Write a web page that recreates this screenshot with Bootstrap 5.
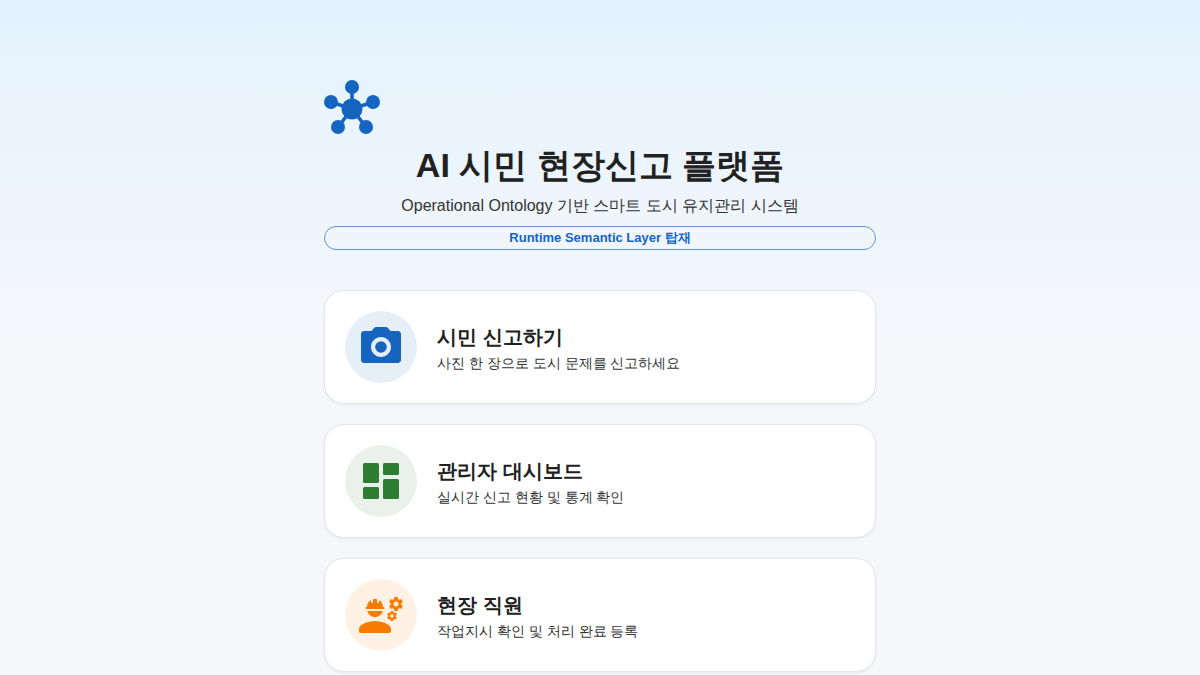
<!DOCTYPE html>
<html lang="ko">
<head>
  <meta charset="UTF-8">
  <meta name="viewport" content="width=device-width, initial-scale=1.0">
  <title>AI 시민 현장신고 플랫폼</title>
  <link href="https://cdn.jsdelivr.net/npm/bootstrap@5.3.0/dist/css/bootstrap.min.css" rel="stylesheet">
  <style>
    body {
      min-height: 100vh;
      font-family: "Liberation Sans", sans-serif;
      color: #212121;
      background: linear-gradient(180deg, #e3f2fd 0%, #f5f7fb 50%, #f5f7fb 100%);
      overflow: hidden;
    }
    .page-wrap { width: 552px; padding-top: 80px; }
    .logo-icon { width: 56px; height: 56px; display: block; }
    .main-title { font-size: 34px; line-height: 41px; font-weight: 700; margin: 9px 0 8px; }
    .sub-title { font-size: 16px; line-height: 24px; color: #333; margin: 0 0 8px; }
    .layer-chip {
      height: 24px;
      line-height: 22px;
      font-size: 13px;
      font-weight: 700;
      color: #1565c0;
      border: 1px solid #5b93d3;
      border-radius: 12px;
      margin-bottom: 40px;
    }
    .menu-list { gap: 20px; }
    .menu-card {
      height: 114px;
      padding: 20px;
      border: 1px solid #e3e6ea;
      border-radius: 20px;
      background: #fff;
      box-shadow: 0 1px 3px rgba(0,0,0,.06);
      gap: 20px;
    }
    .icon-circle { width: 72px; height: 72px; border-radius: 50%; flex: none; }
    .icon-circle svg { width: 48px; height: 48px; }
    .icon-blue { background: #e6eff8; color: #1565c0; }
    .icon-green { background: #eaf1ea; color: #2e7d32; }
    .icon-orange { background: #fff2e5; color: #f57c00; }
    .card-name { font-size: 20px; line-height: 32px; font-weight: 700; margin: 0; }
    .card-desc { font-size: 14px; line-height: 20px; color: #333; margin: 0; }
  </style>
</head>
<body>
<div class="page-wrap mx-auto d-flex flex-column">
  <svg class="logo-icon" viewBox="0 0 56 56" fill="#1565c0" stroke="#1565c0">
    <g stroke-width="3.6">
      <line x1="28" y1="29" x2="28" y2="7"/>
      <line x1="28" y1="29" x2="7" y2="22"/>
      <line x1="28" y1="29" x2="49" y2="22"/>
      <line x1="28" y1="29" x2="14" y2="47"/>
      <line x1="28" y1="29" x2="42" y2="47"/>
    </g>
    <g stroke="none">
      <circle cx="28" cy="29" r="10.5"/>
      <circle cx="28" cy="7" r="7"/>
      <circle cx="7" cy="22" r="7"/>
      <circle cx="49" cy="22" r="7"/>
      <circle cx="14" cy="47" r="7"/>
      <circle cx="42" cy="47" r="7"/>
    </g>
  </svg>
  <h1 class="main-title text-center">AI 시민 현장신고 플랫폼</h1>
  <p class="sub-title text-center">Operational Ontology 기반 스마트 도시 유지관리 시스템</p>
  <div class="layer-chip text-center">Runtime Semantic Layer 탑재</div>

  <div class="d-flex flex-column menu-list">
    <div class="menu-card d-flex align-items-center">
      <div class="icon-circle icon-blue d-flex align-items-center justify-content-center">
        <svg viewBox="0 0 24 24" fill="currentColor"><circle cx="12" cy="12" r="2.9"/><path d="M20.5 4h-3.67l-1.24-1.35c-.37-.41-.91-.65-1.47-.65H9.88c-.56 0-1.1.24-1.48.65L7.17 4H3.5C2.67 4 2 4.67 2 5.5v13c0 .83.67 1.5 1.5 1.5h17c.83 0 1.5-.67 1.5-1.5v-13c0-.83-.67-1.5-1.5-1.5zM12 17c-2.76 0-5-2.24-5-5s2.24-5 5-5 5 2.24 5 5-2.24 5-5 5z"/></svg>
      </div>
      <div>
        <h2 class="card-name">시민 신고하기</h2>
        <p class="card-desc">사진 한 장으로 도시 문제를 신고하세요</p>
      </div>
    </div>
    <div class="menu-card d-flex align-items-center">
      <div class="icon-circle icon-green d-flex align-items-center justify-content-center">
        <svg viewBox="0 0 24 24" fill="currentColor"><rect x="3" y="3" width="8" height="10" rx=".8"/><rect x="3" y="15" width="8" height="6" rx=".8"/><rect x="13" y="3" width="8" height="6" rx=".8"/><rect x="13" y="11" width="8" height="10" rx=".8"/></svg>
      </div>
      <div>
        <h2 class="card-name">관리자 대시보드</h2>
        <p class="card-desc">실시간 신고 현황 및 통계 확인</p>
      </div>
    </div>
    <div class="menu-card d-flex align-items-center">
      <div class="icon-circle icon-orange d-flex align-items-center justify-content-center">
        <svg viewBox="0 0 24 24" fill="currentColor">
          <path d="M9 15c-2.67 0-8 1.34-8 4v1c0 .55.45 1 1 1h14c.55 0 1-.45 1-1v-1c0-2.66-5.33-4-8-4z"/>
          <path d="M22.1,6.84c0.01-0.11,0.02-0.22,0.02-0.34c0-0.12-0.01-0.23-0.03-0.34l0.74-0.58c0.07-0.05,0.08-0.15,0.04-0.22l-0.7-1.21c-0.04-0.08-0.14-0.1-0.21-0.08L21.1,4.42c-0.18-0.14-0.38-0.25-0.59-0.34l-0.13-0.93C20.36,3.06,20.29,3,20.2,3h-1.4c-0.09,0-0.16,0.06-0.17,0.15L18.5,4.08c-0.21,0.09-0.41,0.21-0.59,0.34l-0.87-0.35c-0.08-0.03-0.17,0-0.21,0.08l-0.7,1.21c-0.04,0.08-0.03,0.17,0.04,0.22l0.74,0.58c-0.02,0.11-0.03,0.23-0.03,0.34c0,0.11,0.01,0.23,0.03,0.34l-0.74,0.58c-0.07,0.05-0.08,0.15-0.04,0.22l0.7,1.21c0.04,0.08,0.14,0.1,0.21,0.08l0.87-0.35c0.18,0.14,0.38,0.25,0.59,0.34l0.13,0.93C18.64,9.94,18.71,10,18.8,10h1.4c0.09,0,0.16-0.06,0.17-0.15l0.13-0.93c0.21-0.09,0.41-0.21,0.59-0.34l0.87,0.35c0.08,0.03,0.17,0,0.21-0.08l0.7-1.21c0.04-0.08,0.03-0.17-0.04-0.22L22.1,6.84z M19.5,7.75c-0.69,0-1.25-0.56-1.25-1.25s0.56-1.25,1.25-1.25s1.25,0.56,1.25,1.25S20.19,7.75,19.5,7.75z"/>
          <path d="M19.92,11.68l-0.5-0.87c-0.03-0.06-0.1-0.08-0.15-0.06l-0.62,0.25c-0.13-0.1-0.27-0.18-0.42-0.24l-0.09-0.66C18.12,10.04,18.06,10,18,10h-1c-0.06,0-0.11,0.04-0.12,0.11l-0.09,0.66c-0.15,0.06-0.29,0.15-0.42,0.24l-0.62-0.25c-0.06-0.02-0.12,0-0.15,0.06l-0.5,0.87c-0.03,0.06-0.02,0.12,0.03,0.16l0.53,0.41c-0.01,0.08-0.02,0.16-0.02,0.24c0,0.08,0.01,0.17,0.02,0.24l-0.53,0.41c-0.05,0.04-0.06,0.11-0.03,0.16l0.5,0.87c0.03,0.06,0.1,0.08,0.15,0.06l0.62-0.25c0.13,0.1,0.27,0.18,0.42,0.24l0.09,0.66C16.89,14.96,16.94,15,17,15h1c0.06,0,0.11-0.04,0.12-0.11l0.09-0.66c0.15-0.06,0.29-0.15,0.42-0.24l0.62,0.25c0.06,0.02,0.12,0,0.15-0.06l0.5-0.87c0.03-0.06,0.02-0.12-0.03-0.16l-0.52-0.41c0.01-0.08,0.02-0.16,0.02-0.24c0-0.08-0.01-0.17-0.02-0.24l0.53-0.41C19.95,11.81,19.96,11.74,19.92,11.68z M17.5,13.33c-0.46,0-0.83-0.38-0.83-0.83c0-0.46,0.38-0.83,0.83-0.83s0.83,0.38,0.83,0.83C18.33,12.96,17.96,13.33,17.5,13.33z"/>
          <path d="M4.74,9h8.53c0.27,0,0.49-0.22,0.49-0.49V8.49c0-0.27-0.22-0.49-0.49-0.49H13c0-1.48-0.81-2.75-2-3.45V5.5C11,5.78,10.78,6,10.5,6S10,5.78,10,5.5V4.14C9.68,4.06,9.35,4,9,4S8.32,4.06,8,4.14V5.5C8,5.78,7.78,6,7.5,6S7,5.78,7,5.5V4.55C5.81,5.25,5,6.52,5,8H4.74C4.47,8,4.25,8.22,4.25,8.49v0.03C4.25,8.78,4.47,9,4.74,9z"/>
          <path d="M9,13c1.86,0,3.41-1.28,3.86-3H5.14C5.59,11.72,7.14,13,9,13z"/>
        </svg>
      </div>
      <div>
        <h2 class="card-name">현장 직원</h2>
        <p class="card-desc">작업지시 확인 및 처리 완료 등록</p>
      </div>
    </div>
  </div>
</div>
<script src="https://cdn.jsdelivr.net/npm/bootstrap@5.3.0/dist/js/bootstrap.bundle.min.js"></script>
</body>
</html>
